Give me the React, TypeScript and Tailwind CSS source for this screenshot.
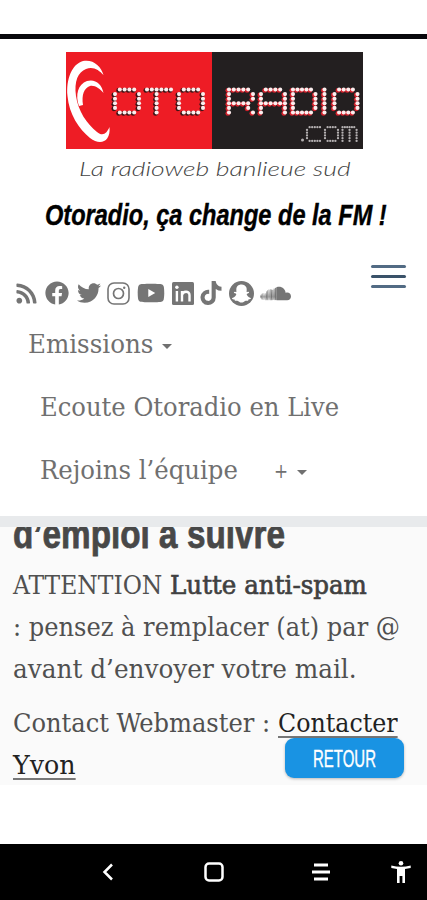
import { useLayoutEffect, useRef, useState, type ReactNode } from "react";
import {
  FaRss, FaFacebook, FaTwitter, FaYoutube, FaTiktok, FaSnapchatGhost, FaSoundcloud,
} from "react-icons/fa";

const serif = "font-['DejaVu_Serif_Condensed','DejaVu_Serif',serif] [font-stretch:condensed]";
const narrow = "font-['Liberation_Sans_Narrow','Liberation_Sans',sans-serif]";

// Scales a run of text horizontally so that it fills the given width.
function Fit({ w, className = "", children }: { w: number; className?: string; children: ReactNode }) {
  const ref = useRef<HTMLSpanElement>(null);
  const [scale, setScale] = useState(1);
  useLayoutEffect(() => {
    if (ref.current) setScale(w / ref.current.offsetWidth);
  }, [w]);
  return (
    <span className={`inline-block shrink-0 whitespace-nowrap ${className}`} style={{ width: w }}>
      <span ref={ref} className="inline-block origin-left" style={{ transform: `scaleX(${scale})` }}>
        {children}
      </span>
    </span>
  );
}

const LED: Record<string, string[]> = {
  O: [".####.", "#....#", "#....#", "#....#", "#....#", ".####."],
  T: ["######", "..#...", "..#...", "..#...", "..#...", "..#..."],
  R: ["#####.", "#....#", "#....#", "#####.", "#...#.", "#....#"],
  A: [".####.", "#....#", "#....#", "######", "#....#", "#....#"],
  D: ["#####.", "#....#", "#....#", "#....#", "#....#", "#####."],
  I: ["#", "#", "#", "#", "#", "#"],
  c: [".#####", "#.....", "#.....", "#.....", "#.....", ".#####"],
  o: [".####.", "#....#", "#....#", "#....#", "#....#", ".####."],
  m: ["######.", "#..#..#", "#..#..#", "#..#..#", "#..#..#", "#..#..#"],
};

function Leds({ ch, x, y, p, q, r, fill, shade }: {
  ch: string; x: number; y: number; p: number; q: number; r: number; fill: string; shade?: string;
}) {
  const dots = LED[ch].flatMap((row, j) =>
    [...row].flatMap((c, i) => (c === "#" ? [[x + i * p, y + j * q]] : [])),
  );
  return (
    <g>
      {shade && dots.map(([a, b], k) => <circle key={k} cx={a - 1.1} cy={b + 0.9} r={r + 0.4} fill={shade} />)}
      {dots.map(([a, b], k) => <circle key={k} cx={a} cy={b} r={r} fill={fill} />)}
    </g>
  );
}

function Logo() {
  const big = { y: 37.5, p: 4.8, q: 4.6, r: 2.05, fill: "#fbeeee" };
  const small = { y: 75.2, p: 2.6, q: 2.75, r: 1.15, fill: "#b5b1b2" };
  return (
    <svg role="img" aria-label="OTO RADIO .com" width="297" height="97" viewBox="0 0 297 97" className="block">
      <rect width="147" height="97" fill="#ee1c25" />
      <rect x="146" width="151" height="97" fill="#231f20" />
      <path d="M37.5 23C35 14 27 7 17 9C6 12 0 27 1.5 44C3 62 13 77 24 86C34 94 45 90 43.5 75C41 81 37 85 31 80C21 72 12 59 10 44C8 29 12 20 20 17C27 14 33 18 37.5 23Z" fill="#fff" />
      <path d="M37.5 41C36 32 29 26.500 21 29C12 32 9 43 13 54L17 53C15.500 43 18 36 24 34C29 33 34 37 37.500 41Z" fill="#fff" />
      <Leds ch="O" x={49} {...big} shade="#3c1517" />
      <Leds ch="T" x={81} {...big} shade="#3c1517" />
      <Leds ch="O" x={113} {...big} shade="#3c1517" />
      <Leds ch="R" x={163} {...big} shade="#d5202b" />
      <Leds ch="A" x={195} {...big} shade="#d5202b" />
      <Leds ch="D" x={227} {...big} p={4.5} shade="#d5202b" />
      <Leds ch="I" x={258.5} {...big} shade="#d5202b" />
      <Leds ch="O" x={268.5} {...big} p={4.6} shade="#d5202b" />
      <circle cx="236.500" cy="88" r="1.500" fill="#b5b1b2" />
      <Leds ch="c" x={241} {...small} />
      <Leds ch="o" x={259} {...small} />
      <Leds ch="m" x={276.5} {...small} p={2.35} />
    </svg>
  );
}

function Caret() {
  return <span className="h-0 w-0 border-x-[5px] border-t-[5px] border-x-transparent border-t-[#707070]" />;
}

function Social() {
  return (
    <div className="flex h-[26px] items-center text-[#757575]">
      <FaRss size={23} className="ml-[15px]" />
      <FaFacebook size={24} className="ml-[7px]" />
      <FaTwitter size={24} className="ml-[8px]" />
      <svg width="23" height="23" viewBox="0 0 23 23" fill="none" stroke="currentColor" className="ml-[6px]">
        <rect x="1" y="1" width="21" height="21" rx="6" strokeWidth="1.6" />
        <circle cx="11.5" cy="11.5" r="5" strokeWidth="1.7" />
        <circle cx="17.2" cy="5.8" r="1.2" fill="currentColor" stroke="none" />
      </svg>
      <FaYoutube size={28} className="ml-[7px]" />
      <svg width="22" height="23" viewBox="0 0 22 23" className="ml-[7px]">
        <rect width="22" height="23" rx="1.5" fill="currentColor" />
        <path d="M4.9 9V19.500M10 19.500V9M10 13.2C10.6 8.8 17.500 8.6 17.500 13V19.500" fill="none" stroke="#fff" strokeWidth="2.4" />
        <circle cx="4.9" cy="5.2" r="1.7" fill="#fff" />
      </svg>
      <FaTiktok size={24} className="ml-[5px]" />
      <span className="ml-[6px] flex h-[25px] w-[25px] items-center justify-center rounded-full bg-[#757575] text-white">
        <FaSnapchatGhost size={19} />
      </span>
      <FaSoundcloud size={31} className="ml-[6px]" />
    </div>
  );
}

export default function App() {
  return (
    <div className="flex h-[900px] w-[427px] flex-col overflow-hidden bg-white">
      <div className="mt-[34px] h-[5px] shrink-0 bg-[#08080c]" />
      <header className="flex h-[477px] shrink-0 flex-col">
        <div className="ml-[66px] mt-[13px]"><Logo /></div>
        <div className="ml-[79px] mt-[5px] h-[28px] font-['Lato',sans-serif] text-[20px] font-light italic leading-[28px] text-[#444]">
          <Fit w={272}>La radioweb banlieue sud</Fit>
        </div>
        <div className={`ml-[45px] mt-[15px] h-[36px] text-[29px] font-bold italic leading-[36px] text-black [-webkit-text-stroke:0.4px_#000] ${narrow}`}>
          <Fit w={342}>Otoradio, ça change de la FM !</Fit>
        </div>
        <div className="mt-[30px] flex h-[44px] items-start justify-between">
          <div className="pt-[17px]"><Social /></div>
          <div className="mr-[21px] mt-[2px] flex w-[35px] flex-col gap-[7px]">
            <i className="h-[3px] rounded bg-[#526b84]" />
            <i className="h-[3px] rounded bg-[#3a5269]" />
            <i className="h-[3px] rounded bg-[#526b84]" />
          </div>
        </div>
        <nav className={`mt-[6px] flex flex-col text-[26px] text-[#707070] ${serif}`}>
          <div className="flex h-[63px] items-center pl-[28px]"><Fit w={125}>Emissions</Fit><span className="ml-[9px] mt-[4px] flex"><Caret /></span></div>
          <div className="flex h-[63px] items-center pl-[40px]"><Fit w={299}>Ecoute Otoradio en Live</Fit></div>
          <div className="flex h-[63px] items-center pl-[40px]">
            <Fit w={198}>Rejoins l’équipe</Fit>
            <Fit w={14} className="ml-[36px] text-[20px]">+</Fit>
            <span className="ml-[9px] mt-[4px] flex"><Caret /></span>
          </div>
        </nav>
      </header>
      <div className="h-[11px] shrink-0 bg-[#e8eaec]" />
      <main className={`relative h-[258px] shrink-0 overflow-hidden bg-[#fafafa] text-[25.5px] text-[#505050] ${serif}`}>
        <h1 className={`-mt-[19px] ml-[13px] h-[56px] text-[41px] font-bold leading-[53px] text-[#484848] [-webkit-text-stroke:0.8px_#484848] ${narrow}`}>
          <Fit w={272}>d’emploi à suivre</Fit>
        </h1>
        <div className="ml-[13px] leading-[42px]">
          <p className="flex gap-[8px]">
            <Fit w={149}>ATTENTION</Fit>
            <Fit w={197} className="text-[#404040] [-webkit-text-stroke:0.6px_#404040]">Lutte anti-spam</Fit>
          </p>
          <p><Fit w={387}>: pensez à remplacer (at) par @</Fit></p>
          <p><Fit w={344}>avant d’envoyer votre mail.</Fit></p>
          <p className="mt-[12px] flex gap-[8px]">
            <Fit w={257}>Contact Webmaster :</Fit>
            <Fit w={120} className="text-[#222]"><u className="decoration-[#777] decoration-2 underline-offset-[4px]">Contacter</u></Fit>
          </p>
          <p><Fit w={63} className="text-[#222]"><u className="decoration-[#777] decoration-2 underline-offset-[4px]">Yvon</u></Fit></p>
        </div>
        <button className={`absolute left-[285px] top-[211px] flex h-[40px] w-[119px] items-center justify-center rounded-[9px] bg-[#1993e3] pt-[3px] text-[24.5px] text-white shadow-[0_1px_3px_#0004] ${narrow}`}>
          <Fit w={63} className="[-webkit-text-stroke:0.4px_#fff]">RETOUR</Fit>
        </button>
      </main>
      <footer className="mt-[59px] flex h-[56px] shrink-0 items-center bg-black">
        <svg width="12" height="18" viewBox="0 0 12 18" fill="none" stroke="#fff" strokeWidth="2.5" className="ml-[102px]"><path d="M10 1.5L2.5 9L10 16.5" /></svg>
        <svg width="20" height="20" viewBox="0 0 20 20" fill="none" stroke="#fff" strokeWidth="2.5" className="ml-[90px]"><rect x="1.5" y="1.5" width="17" height="17" rx="3.5" /></svg>
        <svg width="18" height="18" viewBox="0 0 18 18" stroke="#fff" strokeWidth="2.8" className="ml-[88px]"><path d="M2 2H16M0 9H18M2 16H16" /></svg>
        <svg width="20" height="22" viewBox="0 0 20 22" fill="#fff" className="ml-[61px]"><circle cx="10" cy="2.3" r="2.3" /><path d="M.3 4.5Q10 7 19.7 4.5V7L14 8V22H11.4V15H8.6V22H6V8L.3 7Z" /></svg>
      </footer>
    </div>
  );
}
